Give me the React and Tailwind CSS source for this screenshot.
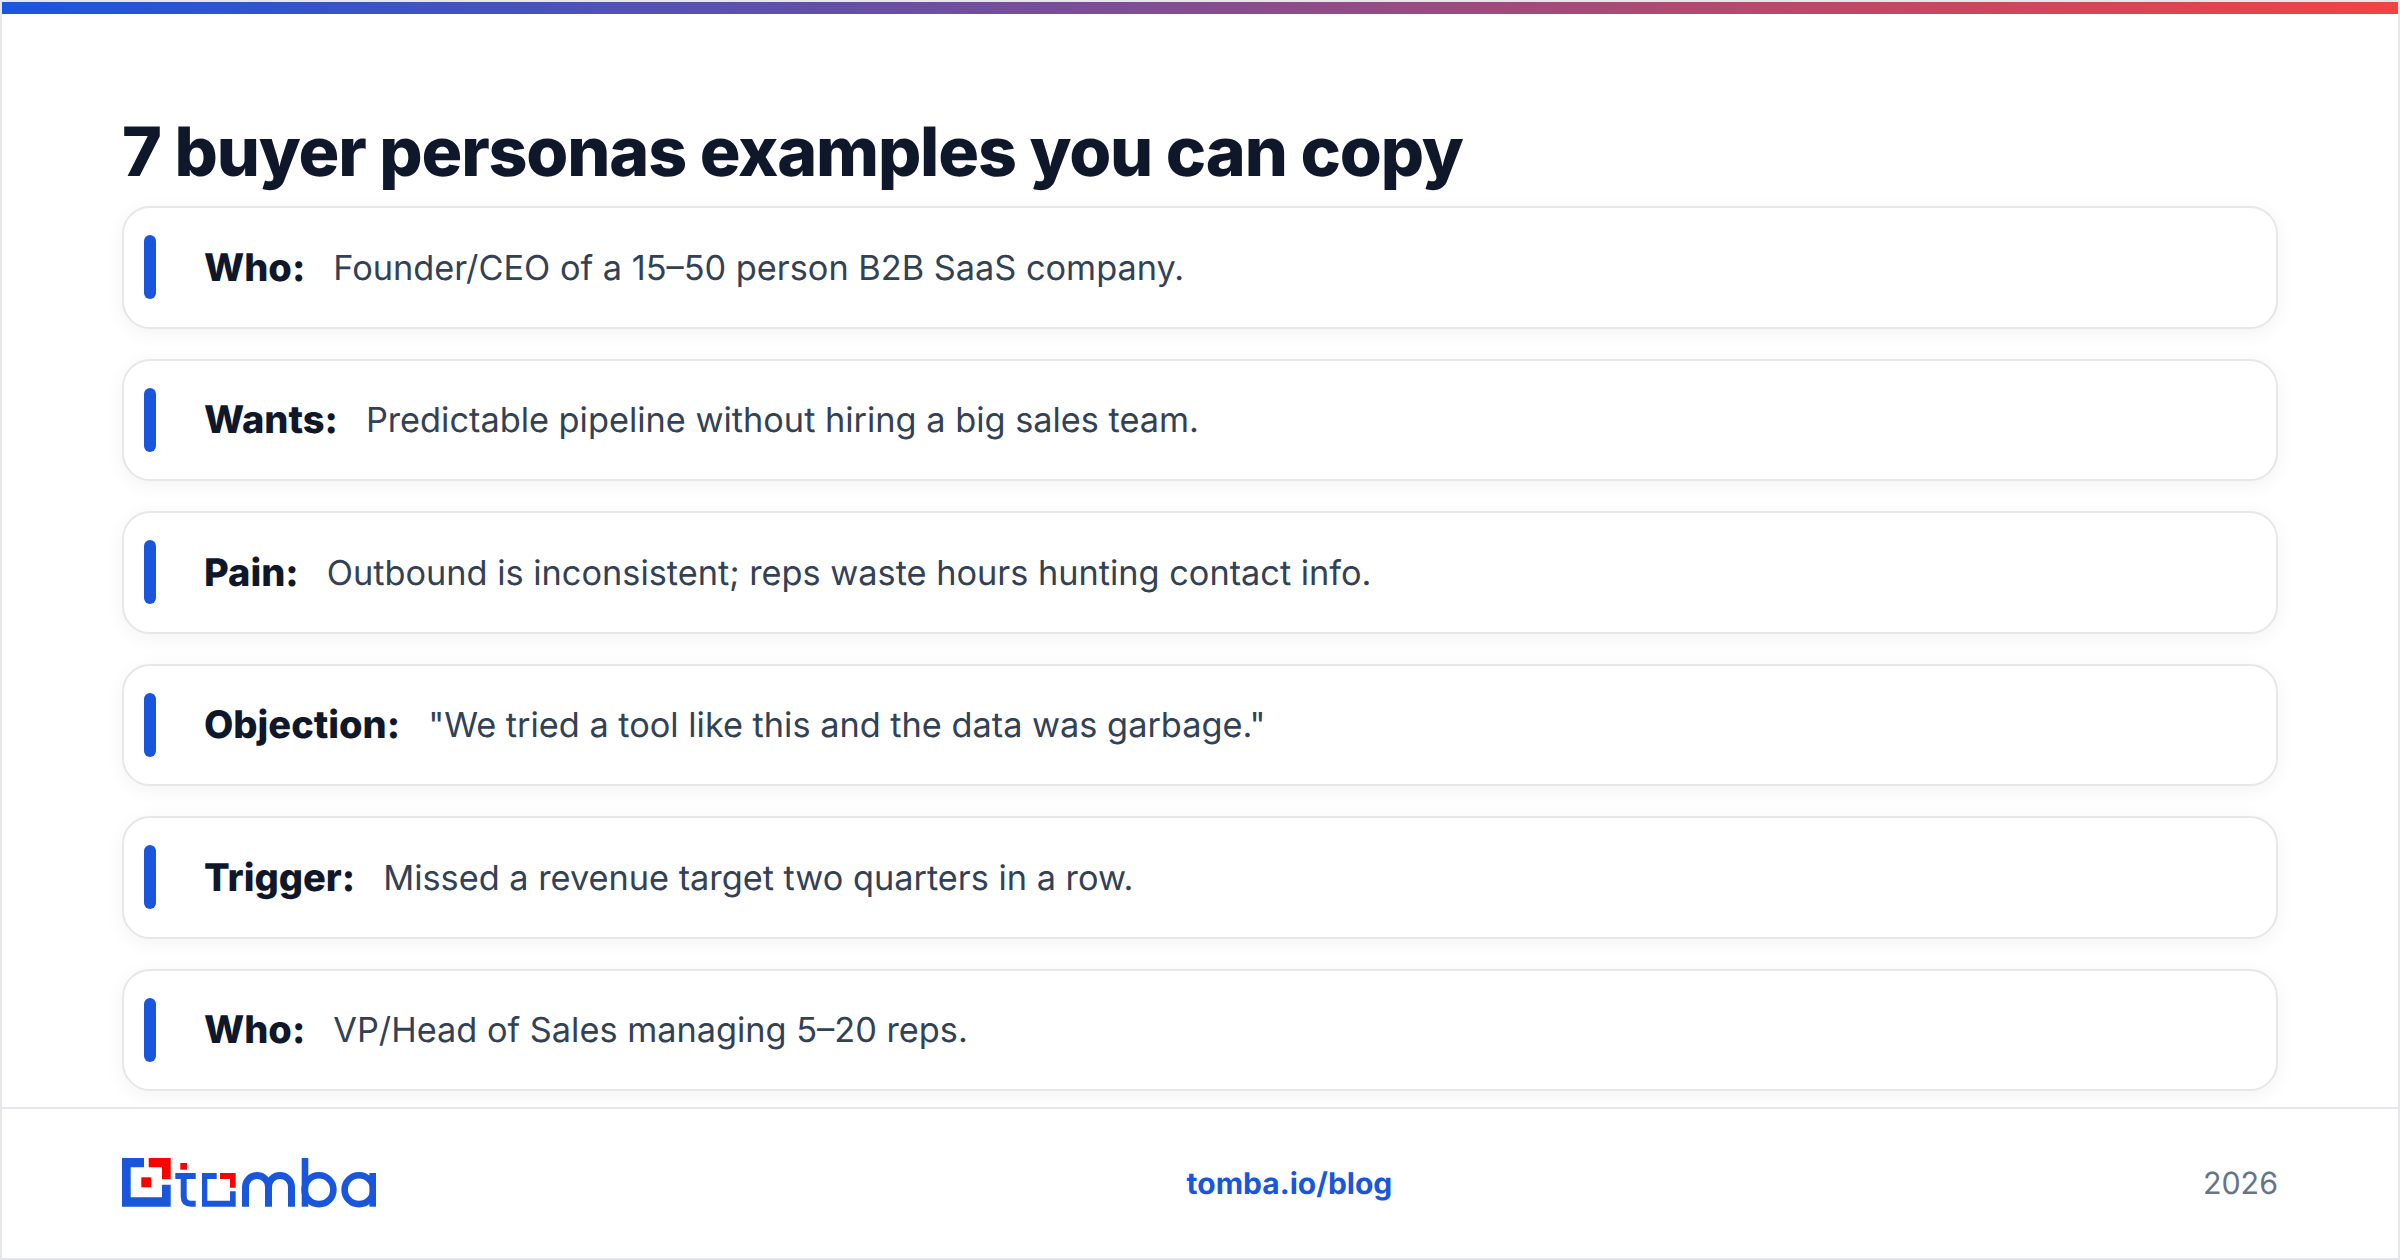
import React from "react";

const rows = [
  { label: "Who:", text: "Founder/CEO of a 15–50 person B2B SaaS company." },
  { label: "Wants:", text: "Predictable pipeline without hiring a big sales team." },
  { label: "Pain:", text: "Outbound is inconsistent; reps waste hours hunting contact info." },
  { label: "Objection:", text: "\"We tried a tool like this and the data was garbage.\"" },
  { label: "Trigger:", text: "Missed a revenue target two quarters in a row." },
  { label: "Who:", text: "VP/Head of Sales managing 5–20 reps." },
];

const Logo = () => (
  <svg width="254" height="50" viewBox="0 0 254 50" fill="none" className="mb-[2px]">
    {/* square mark */}
    <path d="M0 0H22V9.3H8.7V39.3H40V26.7H48.7V48.7H0Z" fill="#1a56db" />
    <path d="M26.7 0H48.7V21.3H40V9.3H26.7Z" fill="#ff0000" />
    <rect x="19.3" y="19.3" width="10" height="10" fill="#ff0000" />
    {/* t */}
    <rect x="58.3" y="5" width="6.7" height="6.7" fill="#ff0000" />
    <path d="M53.3 18H73.7M61.7 15V38.5Q61.7 45.7 69 45.7H73.7" stroke="#1a56db" strokeWidth="6" />
    {/* o */}
    <path d="M80 15H94.7V21H85.3V42.7H108V33.3H113.7V48.7H80Z" fill="#1a56db" />
    <path d="M98 15H113.7V29.7H108V21H98Z" fill="#ff0000" />
    {/* m b a */}
    <path
      d="M123.5 48.7V29A11.5 11.5 0 0 1 146.5 29V48.7M146.5 29A11.5 11.5 0 0 1 169.5 29V48.7"
      stroke="#1a56db"
      strokeWidth="7"
    />
    <path d="M183 0V48.7" stroke="#1a56db" strokeWidth="6.6" />
    <circle cx="197" cy="31.7" r="14.4" stroke="#1a56db" strokeWidth="6.6" />
    <circle cx="237" cy="31.7" r="14.4" stroke="#1a56db" strokeWidth="6.6" />
    <path d="M250.7 15V48.7" stroke="#1a56db" strokeWidth="6.6" />
  </svg>
);

const App = () => {
  return (
    <div className="w-[2400px] h-[1260px] flex flex-col bg-white border-2 border-[#e5e7eb] overflow-hidden font-['Inter',sans-serif] [text-rendering:geometricPrecision]">
      {/* top gradient */}
      <div className="h-[12px] shrink-0 bg-[linear-gradient(90deg,#1a56db,#ef4444)]"></div>

      <div className="flex-1 min-h-0 flex flex-col px-[120px] pt-[97px] pb-[16px]">
        <h1 className="text-[68px] leading-[82px] font-extrabold tracking-[-1.16px] text-[#0f172a] mb-[13px]">
          7 buyer personas examples you can copy
        </h1>

        {/* rows */}
        <div className="flex-1 min-h-0 flex flex-col gap-[30px]">
          {rows.map((row, index) => (
            <div
              key={index}
              className="flex-1 flex items-center gap-[48px] pl-[20px] bg-white border-2 border-[#e5e7eb] rounded-[28px] shadow-[0_4px_20px_rgba(15,23,42,0.05)]"
            >
              <span className="w-[12px] h-[64px] rounded-full bg-[#1a56db]"></span>
              <p className="flex items-center gap-[28px] pt-[2px]">
                <span className="text-[38px] font-extrabold text-[#0f172a]">{row.label}</span>
                <span className="text-[34.3px] text-[#334155]">{row.text}</span>
              </p>
            </div>
          ))}
        </div>
      </div>

      {/* footer */}
      <div className="h-[151px] shrink-0 flex items-center justify-between px-[120px] border-t-2 border-[#e5e7eb]">
        <Logo />
        <span className="text-[30px] font-bold text-[#1a56db] pt-[2px]">tomba.io/blog</span>
        <span className="text-[30.4px] text-[#64748b] pt-[2px]">2026</span>
      </div>
    </div>
  );
};

export default App;
